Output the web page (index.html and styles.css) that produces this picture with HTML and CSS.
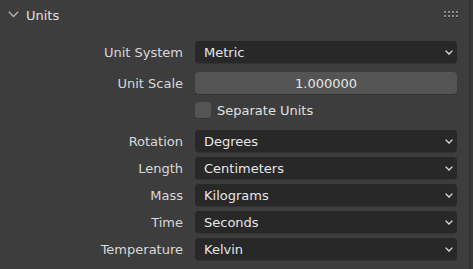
FILE: index.html
```html
<!DOCTYPE html>
<html lang="en">
<head>
    <meta charset="UTF-8">
    <meta name="viewport" content="width=device-width, initial-scale=1.0">
    <title>Units</title>
    <link rel="stylesheet" href="styles.css">
</head>
<body>
    <div class="editor">
        <div class="panel">
            <div class="panel-header">
                <svg class="header-arrow" width="11" height="7" viewBox="0 0 11 7">
                    <polyline points="0.8,0.8 5.5,5.5 10.2,0.8" fill="none" stroke="#b5b5b5" stroke-width="1.3"/>
                </svg>
                <span class="panel-title">Units</span>
                <div class="grip">
                    <span></span><span></span><span></span><span></span>
                    <span></span><span></span><span></span><span></span>
                </div>
            </div>

            <div class="panel-body">
                <div class="row">
                    <label>Unit System</label>
                    <div class="menu">Metric <svg class="caret" width="8" height="5" viewBox="0 0 8 5"><polyline points="0.6,0.6 4,4 7.4,0.6" fill="none" stroke="#e0e0e0" stroke-width="1.3"/></svg></div>
                </div>
                <div class="row gap-small">
                    <label>Unit Scale</label>
                    <div class="number">1.000000</div>
                </div>
                <div class="row gap-tiny">
                    <label></label>
                    <div class="check"><span class="box"></span>Separate Units</div>
                </div>

                <div class="row gap-small">
                    <label>Rotation</label>
                    <div class="menu">Degrees <svg class="caret" width="8" height="5" viewBox="0 0 8 5"><polyline points="0.6,0.6 4,4 7.4,0.6" fill="none" stroke="#e0e0e0" stroke-width="1.3"/></svg></div>
                </div>
                <div class="row gap-tiny">
                    <label>Length</label>
                    <div class="menu">Centimeters <svg class="caret" width="8" height="5" viewBox="0 0 8 5"><polyline points="0.6,0.6 4,4 7.4,0.6" fill="none" stroke="#e0e0e0" stroke-width="1.3"/></svg></div>
                </div>
                <div class="row gap-tiny">
                    <label>Mass</label>
                    <div class="menu">Kilograms <svg class="caret" width="8" height="5" viewBox="0 0 8 5"><polyline points="0.6,0.6 4,4 7.4,0.6" fill="none" stroke="#e0e0e0" stroke-width="1.3"/></svg></div>
                </div>
                <div class="row gap-tiny">
                    <label>Time</label>
                    <div class="menu">Seconds <svg class="caret" width="8" height="5" viewBox="0 0 8 5"><polyline points="0.6,0.6 4,4 7.4,0.6" fill="none" stroke="#e0e0e0" stroke-width="1.3"/></svg></div>
                </div>
                <div class="row gap-tiny">
                    <label>Temperature</label>
                    <div class="menu">Kelvin <svg class="caret" width="8" height="5" viewBox="0 0 8 5"><polyline points="0.6,0.6 4,4 7.4,0.6" fill="none" stroke="#e0e0e0" stroke-width="1.3"/></svg></div>
                </div>
            </div>
        </div>
        <div class="scroll-edge"></div>
    </div>
</body>
</html>
```

FILE: styles.css
```css
body {
    margin: 0;
    background-color: #3d3d3d;
    font-family: "DejaVu Sans", "Liberation Sans", sans-serif;
    font-size: 13px;
    color: #e6e6e6;
}

.editor {
    display: flex;
    height: 269px;
    overflow: hidden;
}

.panel {
    width: 469px;
    background-color: #3d3d3d;
}

.scroll-edge {
    flex: 1;
    border-left: 1px solid #2f2f2f;
    background-color: #393939;
}

.panel-header {
    display: flex;
    align-items: center;
    height: 30px;
    padding-left: 8px;
    padding-right: 11px;
}

.header-arrow {
    margin-top: -1px;
}

.panel-title {
    margin-left: 7px;
    color: #e0e0e0;
}

.grip {
    margin-left: auto;
    display: grid;
    grid-template-columns: repeat(4, 2px);
    grid-auto-rows: 2px;
    column-gap: 2px;
    row-gap: 2px;
    margin-top: -2px;
}

.grip span {
    background-color: #8f8f8f;
    box-shadow: 0 1px 0 #262626;
}

.panel-body {
    padding-top: 11px;
}

.row {
    display: flex;
    align-items: center;
    height: 22px;
}

.gap-small {
    margin-top: 9px;
}

.gap-tiny {
    margin-top: 5px;
}

.row label {
    width: 183px;
    text-align: right;
    color: #d9d9d9;
    margin-right: 12px;
}

.menu, .number {
    width: 262px;
    height: 22px;
    border-radius: 4px;
    box-sizing: border-box;
    display: flex;
    align-items: center;
    box-shadow: 0 1px 0 #333333;
}

.menu {
    background-color: #282828;
    padding-left: 9px;
    padding-right: 4px;
    color: #e6e6e6;
}

.caret {
    margin-left: auto;
}

.number {
    background-color: #545454;
    justify-content: center;
    color: #e6e6e6;
}

.check {
    display: flex;
    align-items: center;
    color: #e0e0e0;
}

.check .box {
    width: 16px;
    height: 16px;
    border-radius: 3px;
    background-color: #545454;
    margin-right: 6px;
    box-shadow: 0 1px 0 #333333;
}
```
